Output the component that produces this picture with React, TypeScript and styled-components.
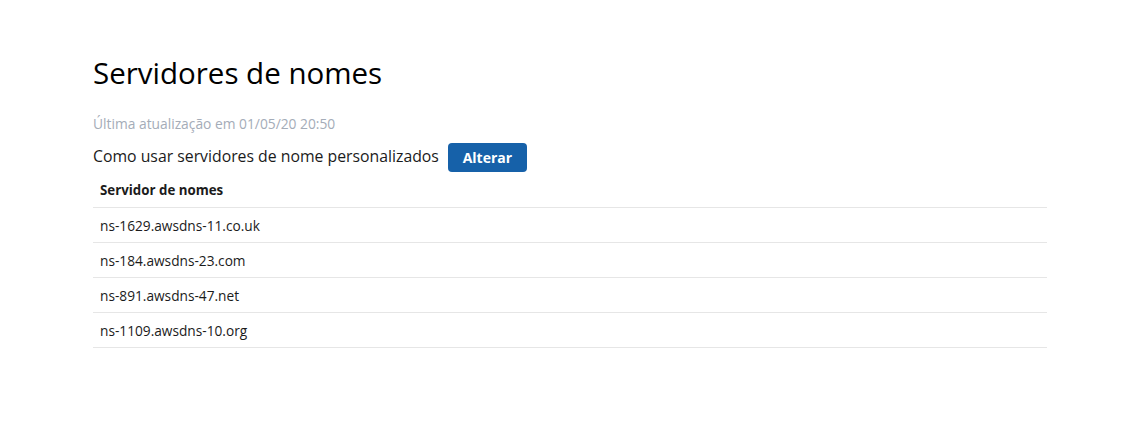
import { FunctionComponent } from 'react'
import styled, { createGlobalStyle } from 'styled-components'

const GlobalStyle = createGlobalStyle`
  body {
    margin: 0;
    background: #fff;
    font-family: 'Open Sans', 'Liberation Sans', sans-serif;
    color: #111;
  }
`

const servers = [
  'ns-1629.awsdns-11.co.uk',
  'ns-184.awsdns-23.com',
  'ns-891.awsdns-47.net',
  'ns-1109.awsdns-10.org'
]

const App: FunctionComponent = () => (
  <>
    <GlobalStyle />
    <Page>
      <Title>Servidores de nomes</Title>
      <Updated>Última atualização em 01/05/20 20:50</Updated>
      <CustomRow>
        <span>Como usar servidores de nome personalizados</span>
        <Button type='button'>Alterar</Button>
      </CustomRow>
      <Table>
        <thead>
          <tr>
            <HeadCell>Servidor de nomes</HeadCell>
          </tr>
        </thead>
        <tbody>
          {servers.map(name => (
            <tr key={name}>
              <Cell>{name}</Cell>
            </tr>
          ))}
        </tbody>
      </Table>
    </Page>
  </>
)

const Page = styled.div`
  width: 954px;
  padding: 56px 0 0 93px;
`

const Title = styled.h1`
  margin: 0;
  font-family: 'Open Sans', 'Liberation Sans', sans-serif;
  font-size: 29.5px;
  font-weight: 400;
  line-height: 34px;
  color: #000;
`

const Updated = styled.div`
  margin-top: 25px;
  font-size: 13.8px;
  line-height: 18px;
  color: #a4acb8;
`

const CustomRow = styled.div`
  display: flex;
  align-items: center;
  gap: 9px;
  margin-top: 10px;
  font-size: 15.8px;
  color: #1b1b1b;

  span {
    margin-top: -4px;
  }
`

const Button = styled.button`
  width: 79px;
  height: 29px;
  border: none;
  border-radius: 4px;
  background: #1661a9;
  color: #fff;
  font-family: 'Open Sans', 'Liberation Sans', sans-serif;
  font-size: 14px;
  font-weight: 700;
  cursor: pointer;
`

const Table = styled.table`
  width: 100%;
  border-collapse: collapse;
  font-size: 13.7px;
`

const HeadCell = styled.th`
  height: 35px;
  padding: 0 7px;
  text-align: left;
  font-size: 13.3px;
  font-weight: 700;
  color: #1b1b1b;
  border-bottom: 1px solid #e6e6e6;
`

const Cell = styled.td`
  height: 34px;
  padding: 0 7px;
  color: #1b1b1b;
  border-bottom: 1px solid #e6e6e6;
`

export default App
